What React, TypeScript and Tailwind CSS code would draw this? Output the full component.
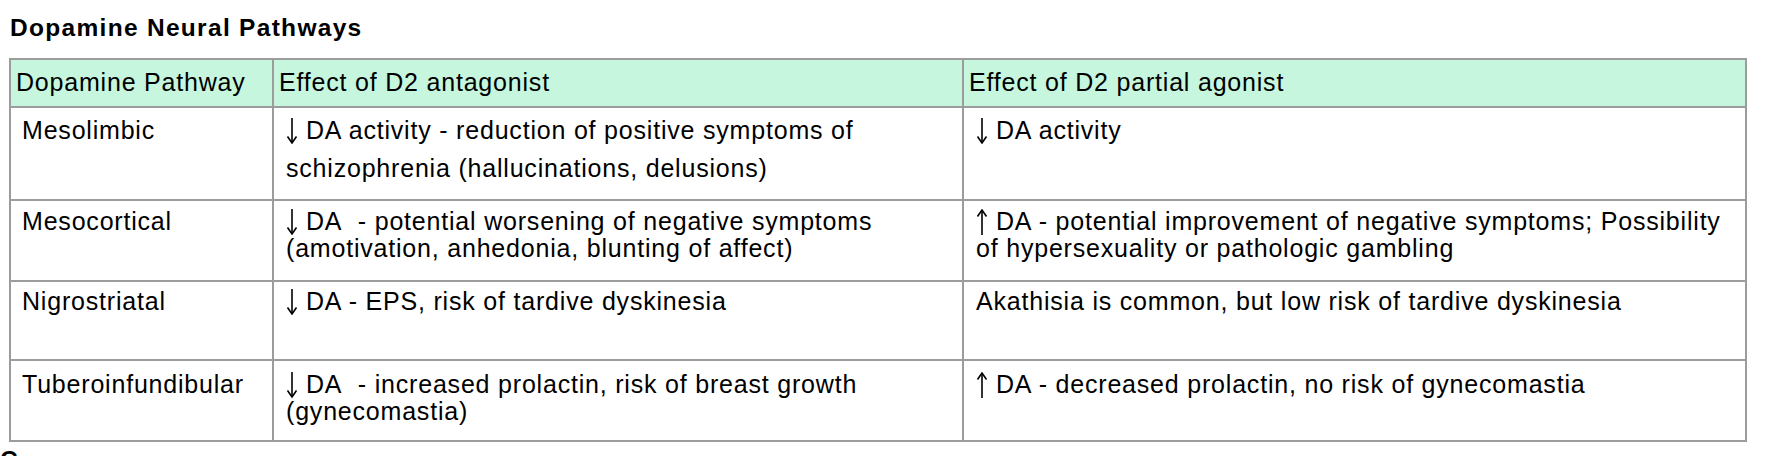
import React from "react";

const font = { fontFamily: '"Liberation Sans", Arial, Helvetica, sans-serif' };

function Arrow({ up = false }: { up?: boolean }) {
  return (
    <svg
      viewBox="0 0 12 26"
      className="inline-block w-[12px] h-[26px] align-[-5px] mr-[8px]"
      fill="none"
      stroke="#000"
      strokeWidth="1.6"
      strokeLinecap="butt"
    >
      {up ? (
        <>
          <line x1="6" y1="1" x2="6" y2="26" />
          <polyline points="1.5,7.5 6,1 10.5,7.5" />
        </>
      ) : (
        <>
          <line x1="6" y1="0" x2="6" y2="25" />
          <polyline points="1.5,18.5 6,25 10.5,18.5" />
        </>
      )}
    </svg>
  );
}

export default function App() {
  const head = "bg-[#c6f7de] pl-[5px] pt-[9px] leading-[26px]";
  const cell = "bg-white leading-[26px]";
  return (
    <div style={font} className="w-[1768px] h-[456px] overflow-hidden bg-white text-black text-[25px] tracking-[0.8px]">
      <div className="pt-[14px] pl-[10px] font-bold text-[24.5px] tracking-[1.3px] leading-[28px]">
        Dopamine Neural Pathways
      </div>
      <div className="mt-[16px] ml-[9px] w-max grid grid-cols-[261px_688px_781px] grid-rows-[46px_91px_79px_77px_79px] gap-[2px] p-[2px] bg-[#9c9c9c]">
        <div className={head}>Dopamine Pathway</div>
        <div className={head}>Effect of D2 antagonist</div>
        <div className={head}>Effect of D2 partial agonist</div>

        <div className={`${cell} pl-[11px] pt-[9px]`}>Mesolimbic</div>
        <div className={`${cell} pl-[12px] pt-[3px] leading-[38px]`}>
          <Arrow />
          DA activity - reduction of positive symptoms of schizophrenia (hallucinations, delusions)
        </div>
        <div className={`${cell} pl-[12px] pt-[9px]`}>
          <Arrow />
          DA activity
        </div>

        <div className={`${cell} pl-[11px] pt-[7px]`}>Mesocortical</div>
        <div className={`${cell} pl-[12px] pt-[7px]`}>
          <Arrow />
          DA{"\u00a0"} - potential worsening of negative symptoms (amotivation, anhedonia, blunting of affect)
        </div>
        <div className={`${cell} pl-[12px] pt-[7px]`}>
          <Arrow up />
          DA - potential improvement of negative symptoms; Possibility of hypersexuality or pathologic gambling
        </div>

        <div className={`${cell} pl-[11px] pt-[6px]`}>Nigrostriatal</div>
        <div className={`${cell} pl-[12px] pt-[6px]`}>
          <Arrow />
          DA - EPS, risk of tardive dyskinesia
        </div>
        <div className={`${cell} pl-[12px] pt-[6px]`}>Akathisia is common, but low risk of tardive dyskinesia</div>

        <div className={`${cell} pl-[11px] pt-[10px]`}>Tuberoinfundibular</div>
        <div className={`${cell} pl-[12px] pt-[10px]`}>
          <Arrow />
          DA{"\u00a0"} - increased prolactin, risk of breast growth (gynecomastia)
        </div>
        <div className={`${cell} pl-[12px] pt-[10px]`}>
          <Arrow up />
          DA - decreased prolactin, no risk of gynecomastia
        </div>
      </div>
      <div className="mt-[4px] font-bold text-[24.5px] leading-[28px]">C</div>
    </div>
  );
}
